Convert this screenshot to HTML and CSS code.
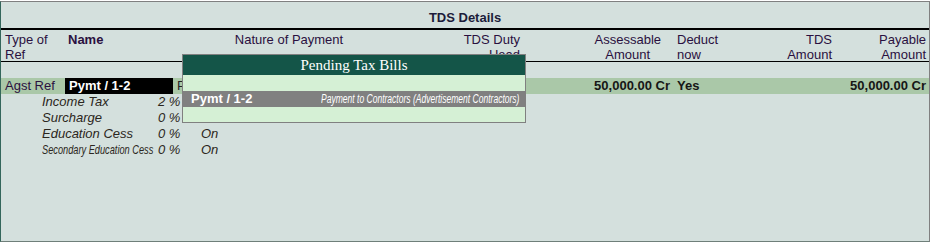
FILE: index.html
```html
<!DOCTYPE html>
<html lang="en">
<head>
  <meta charset="UTF-8" />
  <title>TDS Details</title>
  <link rel="stylesheet" href="styles.css">
</head>
<body>
  <div class="screen">
    <div class="title">TDS Details</div>

    <div class="cols head">
      <div class="c1">Type of<br>Ref</div>
      <div class="c2 bold">Name</div>
      <div class="c3">Nature of Payment</div>
      <div class="c4">TDS Duty<br>Head</div>
      <div class="c5"><span class="stack">Assessable<br>Amount</span></div>
      <div class="c6">Deduct<br>now</div>
      <div class="c7">TDS<br>Amount</div>
      <div class="c8">Payable<br>Amount</div>
    </div>

    <div class="blank"></div>

    <div class="cols entry">
      <div class="c1">Agst Ref</div>
      <div class="c2 name-box">Pymt / 1-2</div>
      <div class="c3 clip">Payment to Contractors (Advertisement Contractors)</div>
      <div class="c4"></div>
      <div class="c5 bold">50,000.00 Cr</div>
      <div class="c6 bold">Yes</div>
      <div class="c7"></div>
      <div class="c8 bold">50,000.00 Cr</div>
    </div>

    <div class="duty"><span class="duty-name">Income Tax</span><span class="duty-rate">2 %</span><span>On</span></div>
    <div class="duty"><span class="duty-name">Surcharge</span><span class="duty-rate">0 %</span><span>On</span></div>
    <div class="duty"><span class="duty-name">Education Cess</span><span class="duty-rate">0 %</span><span>On</span></div>
    <div class="duty"><span class="duty-name"><span class="narrow">Secondary Education Cess</span></span><span class="duty-rate">0 %</span><span>On</span></div>

    <div class="popup">
      <div class="popup-title">Pending Tax Bills</div>
      <div class="bill"></div>
      <div class="bill selected">
        <span class="bill-ref">Pymt / 1-2</span>
        <span class="bill-nature"><span class="narrow-r">Payment to Contractors (Advertisement Contractors)</span></span>
      </div>
      <div class="bill last"></div>
    </div>
  </div>
</body>
</html>
```

FILE: styles.css
```css
body {
  margin: 0;
  background: #fff;
  font-family: "Liberation Sans", Arial, sans-serif;
  font-size: 13px;
}
.screen {
  position: relative;
  box-sizing: border-box;
  width: 930px;
  height: 241px;
  margin-top: 1px;
  background: #d4e0dd;
  border-top: 1px solid #808080;
  border-bottom: 1px solid #6f7f7a;
  border-left: 1px solid #34665b;
  border-right: 1px solid #808080;
  color: #2a1040;
}
.title {
  height: 28px;
  padding-top: 8px;
  box-sizing: border-box;
  line-height: 16px;
  text-align: center;
  font-weight: bold;
  color: #1c1c3a;
  border-bottom: 2px solid #000;
}
.bold {
  font-weight: bold;
}
.cols {
  display: grid;
  grid-template-columns: 64px 108px 232px 117px 150px 68px 94px 95px;
  white-space: nowrap;
}
.cols > div {
  overflow: hidden;
}
.c1 { padding-left: 4px; }
.c2 { padding-left: 3px; }
.c3 { padding-left: 4px; }
.c4 { text-align: right; padding-right: 2px; }
.c5 { text-align: right; padding-right: 2px; }
.c6 { padding-left: 5px; }
.c7 { text-align: right; padding-right: 2px; }
.c8 { text-align: right; padding-right: 3px; }

.head {
  height: 32px;
  padding-top: 2px;
  box-sizing: border-box;
  line-height: 15px;
  border-bottom: 1px solid #000;
}
.head .c3 {
  text-align: center;
  padding-left: 0;
}
.head .c5 {
  padding-right: 11px;
}
.stack {
  display: inline-block;
  text-align: center;
}
.blank {
  height: 16px;
}
.entry {
  height: 16px;
  line-height: 16px;
  background: #aac8a8;
}
.entry .bold {
  color: #161616;
}
.name-box {
  background: #000;
  color: #fff;
  font-weight: bold;
  padding-left: 4px;
}
.clip {
  color: #222;
}
.duty {
  display: flex;
  height: 16px;
  line-height: 16px;
  padding-left: 41px;
  font-style: italic;
  color: #2b2620;
  white-space: nowrap;
}
.duty-name {
  width: 116px;
  flex: none;
}
.duty-rate {
  width: 43px;
  flex: none;
}
.narrow {
  display: inline-block;
  transform: scaleX(0.71);
  transform-origin: left center;
}
.popup {
  position: absolute;
  left: 181px;
  top: 52px;
  width: 344px;
  box-sizing: border-box;
  border: 1px solid #808080;
  background: #d5f0d5;
}
.popup-title {
  height: 20px;
  line-height: 20px;
  background: #145548;
  color: #fff;
  text-align: center;
  font-family: "Liberation Serif", "Times New Roman", serif;
  font-size: 15px;
}
.bill {
  display: flex;
  align-items: center;
  height: 16px;
  line-height: 16px;
  white-space: nowrap;
}
.bill.last {
  height: 15px;
}
.selected {
  background: #808080;
  color: #fff;
  padding: 0 6px 0 8px;
}
.bill-ref {
  flex: none;
  font-weight: bold;
}
.bill-nature {
  flex: 1;
  min-width: 0;
  display: flex;
  justify-content: flex-end;
  font-size: 12px;
  font-style: italic;
}
.narrow-r {
  flex: none;
  transform: scaleX(0.71);
  transform-origin: right center;
}
```
